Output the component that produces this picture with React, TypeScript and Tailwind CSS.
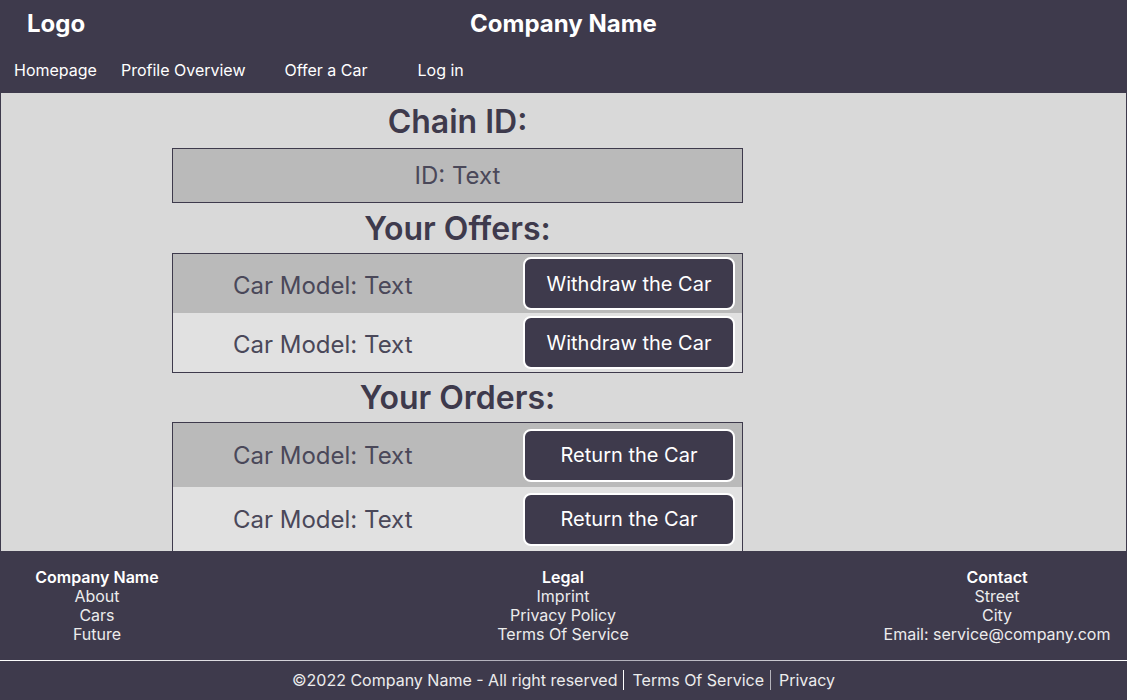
import React from "react";

const offers = ["Car Model: Text", "Car Model: Text"];
const orders = ["Car Model: Text", "Car Model: Text"];

function Row({
  label,
  action,
  shade,
  height,
  offset,
}: {
  label: string;
  action: string;
  shade: boolean;
  height: string;
  offset: string;
}) {
  return (
    <div
      className={`flex items-center justify-between ${height} ${
        shade ? "bg-[#bababa]" : "bg-[#e1e1e1]"
      }`}
    >
      <span className={`pl-[60px] text-[24px] text-[#4a4859] ${offset}`}>
        {label}
      </span>
      <button className="mr-[7px] h-[53px] w-[212px] rounded-[8px] border-2 border-white bg-[#3e3a4c] text-[20px] text-white">
        {action}
      </button>
    </div>
  );
}

export default function App() {
  return (
    <div className="flex h-[700px] flex-col font-['Inter',sans-serif]">
      {/* Header */}
      <header className="h-[93px] bg-[#3e3a4c] text-white">
        <div className="relative flex h-[40px] items-center pt-[8px]">
          <span className="ml-[27px] text-[24px] font-bold leading-[32px]">Logo</span>
          <span className="absolute left-1/2 top-[8px] -translate-x-1/2 text-[24px] font-bold leading-[32px]">
            Company Name
          </span>
        </div>
        <nav className="mt-[18px] flex text-[16px] leading-[24px]">
          <a className="ml-[14px]">Homepage</a>
          <a className="ml-[24px]">Profile Overview</a>
          <a className="ml-[39px]">Offer a Car</a>
          <a className="ml-[50px]">Log in</a>
        </nav>
      </header>

      {/* Main */}
      <main className="h-[458px] overflow-hidden border-x border-[#3e3a4c] bg-[#d9d9d9] pl-[171px] pt-[9px] text-[#3e3a4c]">
        <div className="w-[571px]">
          <h1 className="h-10 text-center text-[32px] font-semibold leading-10">
            Chain ID:
          </h1>
          <div className="mt-[6px] flex h-[55px] items-center justify-center border border-[#3e3a4c] bg-[#bababa] text-[24px] text-[#4a4859]">
            ID: Text
          </div>

          <h1 className="mt-[6px] h-10 text-center text-[32px] font-semibold leading-10">
            Your Offers:
          </h1>
          <div className="mt-[4px] border border-[#3e3a4c]">
            {offers.map((o, i) => (
              <Row
                key={i}
                label={o}
                action="Withdraw the Car"
                shade={i === 0}
                height="h-[59px]"
                offset="pt-[5px]"
              />
            ))}
          </div>

          <h1 className="mt-[5px] h-10 text-center text-[32px] font-semibold leading-10">
            Your Orders:
          </h1>
          <div className="mt-[4px] border border-[#3e3a4c]">
            {orders.map((o, i) => (
              <Row
                key={i}
                label={o}
                action="Return the Car"
                shade={i === 0}
                height="h-[64px]"
                offset="pt-[2px]"
              />
            ))}
          </div>
        </div>
      </main>

      {/* Footer */}
      <footer className="flex-1 bg-[#3e3a4c] pt-[17px] text-[16px] leading-[19px] text-[#ececec]">
        <div className="flex">
          <div className="flex w-[194px] flex-col items-center">
            <span className="font-semibold text-white">Company Name</span>
            <span>About</span>
            <span>Cars</span>
            <span>Future</span>
          </div>
          <div className="ml-[244px] flex w-[250px] flex-col items-center">
            <span className="font-semibold text-white">Legal</span>
            <span>Imprint</span>
            <span>Privacy Policy</span>
            <span>Terms Of Service</span>
          </div>
          <div className="ml-auto flex w-[260px] flex-col items-center">
            <span className="font-semibold text-white">Contact</span>
            <span>Street</span>
            <span>City</span>
            <span>Email: service@company.com</span>
          </div>
        </div>
        <div className="mt-[16px] h-px bg-gradient-to-r from-white via-[#a9a7b3] to-white" />
        <div className="mt-[9px] flex items-center justify-center leading-[20px]">
          <span className="pr-[6px]">©2022 Company Name - All right reserved</span>
          <span className="border-l border-white pl-[8px] pr-[6px]">
            Terms Of Service
          </span>
          <span className="border-l border-[#b4b3bb] pl-[8px]">Privacy</span>
        </div>
      </footer>
    </div>
  );
}
